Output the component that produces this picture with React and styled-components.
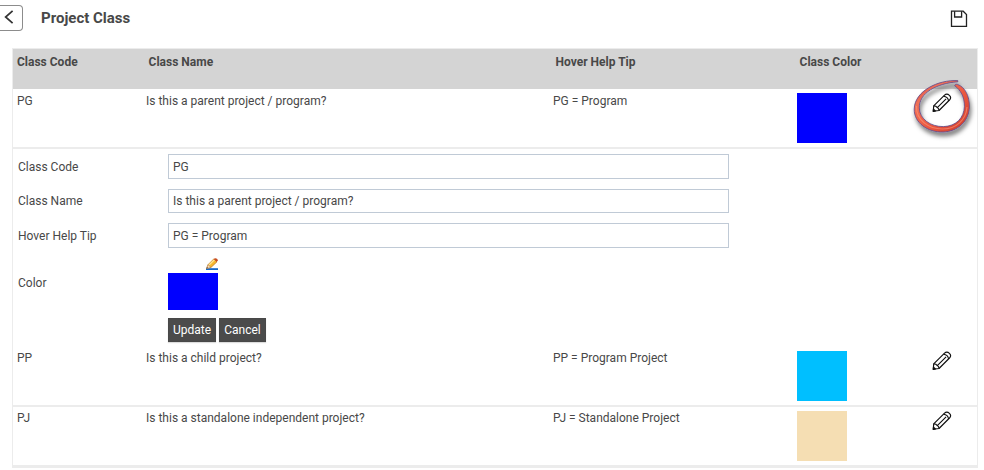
import React, {useState} from 'react'
import styled, {createGlobalStyle} from 'styled-components'

const classes = [
    {code: 'PG', name: 'Is this a parent project / program?', tip: 'PG = Program', color: '#0000ff'},
    {code: 'PP', name: 'Is this a child project?', tip: 'PP = Program Project', color: '#00bfff'},
    {code: 'PJ', name: 'Is this a standalone independent project?', tip: 'PJ = Standalone Project', color: '#f5deb3'},
]

const PencilIcon = () => (
    <svg width="20" height="20" viewBox="0 0 20 20" fill="none" stroke="#111" strokeWidth="1.15" strokeLinejoin="round">
        <path d="M1.3 18.2L1.7 12.9L12.3 2.3C13.7 1 16 1 17.4 2.3C18.8 3.6 18.8 5.6 17.5 7L7 17.5Z" />
        <path d="M1.7 12.9C3.4 12.8 4.6 13.6 5.3 14.6C6.3 15.2 7 16.2 7 17.5M5.3 14.6L14.1 5.8" />
        <path d="M11.6 3.2C14.2 3.4 16.2 5.4 16.6 8" />
        <path d="M1.2 18.4L1.5 16.2L3.4 18Z" fill="#111" />
    </svg>
)

const SaveIcon = () => (
    <svg width="18" height="18" viewBox="0 0 18 18" fill="none" stroke="#222" strokeWidth="1.3">
        <path d="M1.5 1.2H13.2L16.5 4.5V16.3H1.5Z" />
        <path d="M4.6 1.2V7H11.6V1.2" />
    </svg>
)

const ColorPencil = () => (
    <svg width="12" height="12" viewBox="0 0 12 12">
        <path d="M0 10.2H12V12H0Z" fill="#1768c8" />
        <path d="M.8 10.3L2 6.7L7.8 .9L11 3.8L5 9.4Z" fill="#f6b72c" stroke="#b9741c" strokeWidth=".7" />
        <path d="M3 7L8.5 1.8" stroke="#ffe694" strokeWidth="1.2" />
        <path d="M7.7 1L9 .2C10 -.1 12 1 11.8 2.6L10.7 3.9Z" fill="#c84d22" />
        <path d="M.6 10.4L2 6.7L4.9 9.4Z" fill="#f7dfbd" stroke="#ac7d54" strokeWidth=".5" />
        <path d="M.5 10.5L1 9L2 10Z" fill="#553624" />
    </svg>
)

const Marker = () => (
    <svg width="68" height="68" viewBox="0 0 68 68">
        <defs>
            <linearGradient id="red" x1="0" y1="0" x2="1" y2="1">
                <stop offset="0" stopColor="#b8323a" />
                <stop offset=".25" stopColor="#f07058" />
                <stop offset=".6" stopColor="#ea563f" />
                <stop offset="1" stopColor="#c9382b" />
            </linearGradient>
            <filter id="drop" x="-20%" y="-20%" width="150%" height="150%">
                <feDropShadow dx="1.5" dy="4" stdDeviation="2" floodColor="#000" floodOpacity=".5" />
            </filter>
        </defs>
        <path
            d="M46.8 4.6C27 3.6 3.6 15 3.2 33C2.9 47 17 56.4 32 56C47 55.6 58 45 58.4 31C58.6 20 54 11 46.5 8.4C45 7.9 43.3 8.6 43.8 9.8C49.5 14 53.6 21 53.4 30.5C53 42 45 50.2 32.5 50.6C19.5 50.8 8.6 43 8.3 32C7.9 17 25.5 7.4 46.8 5.8Z"
            fill="url(#red)" stroke="#5c4a8c" strokeWidth=".8" strokeLinejoin="round" filter="url(#drop)"
        />
        <path d="M5.4 30C5.2 44.5 17.5 52.8 31.5 53C45.5 53 55 44 56 31" fill="none" stroke="#ff9c80" strokeWidth="1.2" opacity=".55" />
    </svg>
)

export default function App() {
    const [form, setform] = useState(classes[0])

    const change = (e) => {
        setform({...form, [e.target.name]: e.target.value})
    }

    const Submit = (e) => {
        e.preventDefault()
    }

    return (
        <Page>
            <Global />
            <Top>
                <Back type="button" aria-label="Back">
                    <svg width="10" height="14" viewBox="0 0 10 14" fill="none" stroke="#333" strokeWidth="1.7">
                        <path d="M8.6 .8L1.6 7L8.6 13.2" />
                    </svg>
                </Back>
                <Title>Project Class</Title>
                <Save type="button" aria-label="Save"><SaveIcon /></Save>
            </Top>
            <Table>
                <Head>
                    <HeadCell>Class Code</HeadCell>
                    <HeadCell $indent>Class Name</HeadCell>
                    <HeadCell $indent>Hover Help Tip</HeadCell>
                    <HeadCell $indent>Class Color</HeadCell>
                </Head>
                {classes.map((item, i) => (
                    <React.Fragment key={item.code}>
                        <Row>
                            <Cell $raised={i > 0}>{item.code}</Cell>
                            <Cell $raised={i > 0}>{item.name}</Cell>
                            <Cell $raised={i > 0}>{item.tip}</Cell>
                            <Swatch $color={item.color} />
                            <Edit type="button" aria-label="Edit">
                                <PencilIcon />
                                {i === 0 ? <Ring><Marker /></Ring> : ''}
                            </Edit>
                        </Row>
                        {i === 0 ? <Form onSubmit={Submit}>
                            <Label htmlFor="code">Class Code</Label>
                            <Input id="code" name="code" value={form.code} onChange={change} />
                            <Label htmlFor="name" $top="4px">Class Name</Label>
                            <Input id="name" name="name" value={form.name} onChange={change} $short />
                            <Label htmlFor="tip">Hover Help Tip</Label>
                            <Input id="tip" name="tip" value={form.tip} onChange={change} />
                            <Label as="span" $top="17px">Color</Label>
                            <Picker>
                                <ColorPencil />
                                <Swatch $color={form.color} $height="37px" />
                            </Picker>
                            <Buttons>
                                <Button type="submit" $width="48px">Update</Button>
                                <Button type="button" $width="47px">Cancel</Button>
                            </Buttons>
                        </Form> : ''}
                    </React.Fragment>
                ))}
            </Table>
        </Page>
    )
}

const Global = createGlobalStyle`
    *{
        box-sizing: border-box;
    }
    body{
        margin: 0;
        background-color: #fff;
        overflow: hidden;
    }
    svg{
        display: block;
    }
    button, input{
        font: inherit;
        letter-spacing: inherit;
    }
`

const Page = styled.div`
    width: 984px;
    height: 470px;
    font-family: Roboto, "Liberation Sans", sans-serif;
    font-size: 12px;
    line-height: 16px;
    color: #484848;
`

const Top = styled.header`
    display: flex;
    align-items: flex-start;
    height: 48px;
    padding: 5px 16px 0 0;
`

const Back = styled.button`
    display: flex;
    align-items: center;
    width: 23px;
    height: 26px;
    padding: 0 0 2px 4px;
    border: 1px solid #8c8c8c;
    border-left: none;
    border-radius: 0 4px 4px 0;
    background: none;
`

const Title = styled.h1`
    margin: 3px 0 0 18px;
    font-size: 15px;
    line-height: 20px;
    font-weight: 700;
`

const Save = styled.button`
    margin: 5px 0 0 auto;
    padding: 0;
    border: none;
    background: none;
`

const Table = styled.main`
    width: 966px;
    margin-left: 12px;
    border: 1px solid #ececec;
`

const Head = styled.div`
    display: grid;
    grid-template-columns: 129px 407px 244px 1fr;
    height: 40px;
    padding: 5px 0 0 4px;
    background-color: #d4d4d4;
`

const HeadCell = styled.div`
    padding-left: ${(p) => p.$indent ? '2.6px' : '0'};
    font-weight: 700;
`

const Row = styled.div`
    display: grid;
    grid-template-columns: 129px 407px 244px 135px 20px;
    align-items: start;
    height: 60px;
    padding: 4px 0 0 4px;
    border-bottom: 2px solid #ececec;
`

const Cell = styled.div`
    margin-top: ${(p) => p.$raised ? '-1px' : '0'};
`

const Swatch = styled.div`
    width: 50px;
    height: ${(p) => p.$height || '50px'};
    background-color: ${(p) => p.$color};
`

const Edit = styled.button`
    position: relative;
    width: 20px;
    height: 20px;
    padding: 0;
    border: none;
    background: none;
`

const Ring = styled.span`
    position: absolute;
    left: -21px;
    top: -17px;
    pointer-events: none;
`

const Form = styled.form`
    display: grid;
    grid-template-columns: 150px 561px;
    grid-template-rows: 35px 34px 35px 60px 24px;
    align-items: start;
    align-content: start;
    height: 198px;
    padding: 5px 0 0 5px;
`

const Label = styled.label`
    padding-top: ${(p) => p.$top || '5px'};
`

const Input = styled.input`
    width: 561px;
    height: ${(p) => p.$short ? '24px' : '25px'};
    padding: 0 4px;
    border: 1px solid #c0cad6;
    border-radius: 0;
    outline: none;
    color: #484848;
`

const Picker = styled.div`
    display: flex;
    flex-direction: column;
    align-items: flex-end;
    width: 50px;
    gap: 3px;
`

const Buttons = styled.div`
    display: flex;
    gap: 3px;
    grid-column: 2;
`

const Button = styled.button`
    width: ${(p) => p.$width};
    height: 24px;
    padding: 0;
    border: 1px solid #484848;
    background-color: #4b4b4b;
    color: #fff;
    box-shadow: 0 1px 1px #ddd;
`
